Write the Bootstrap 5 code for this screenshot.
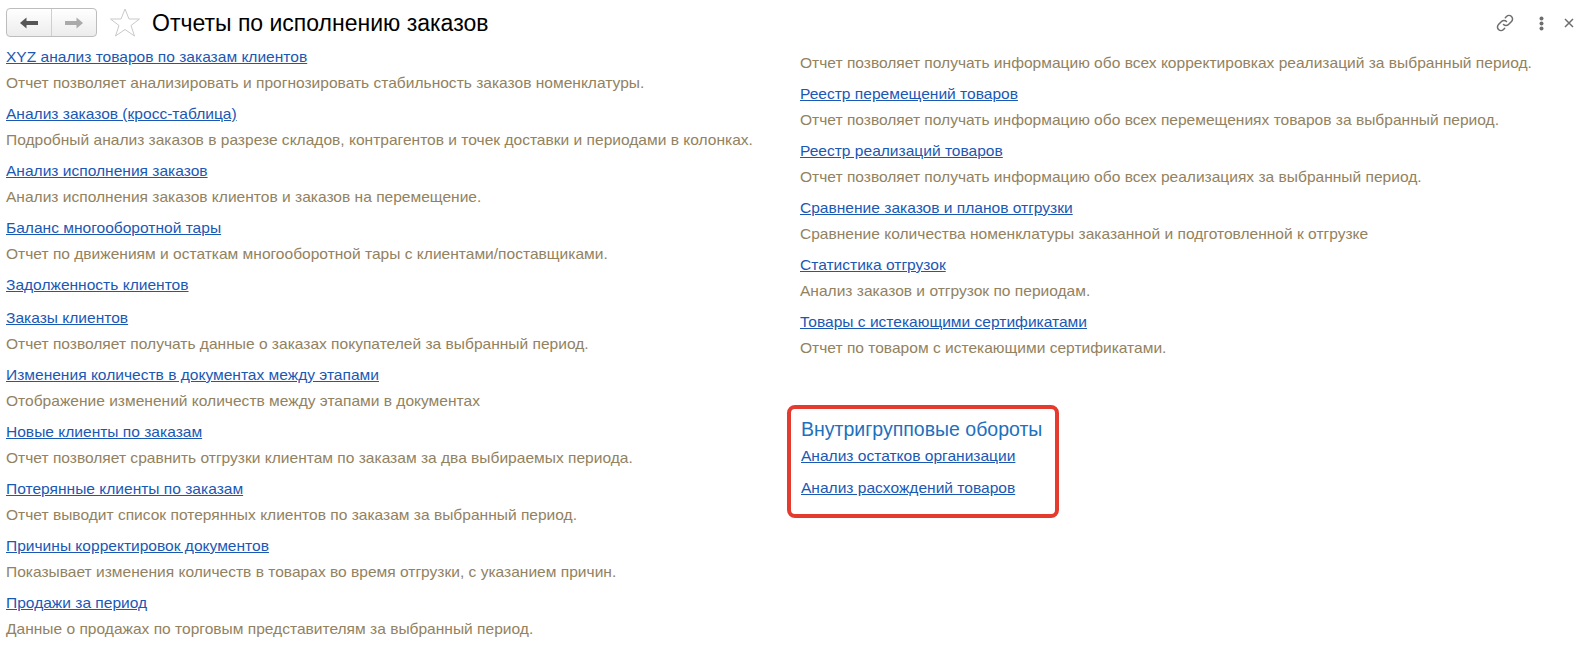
<!DOCTYPE html>
<html lang="ru"><head><meta charset="utf-8"><title>Отчеты</title>
<link rel="stylesheet" href="https://cdn.jsdelivr.net/npm/bootstrap@5.3.0/dist/css/bootstrap.min.css">
<style>
html,body{height:650px;overflow:hidden;background:#fff}
body{font-family:"Liberation Sans",Arial,sans-serif;font-size:15.55px;line-height:17px}
.topbar{height:46px;padding:8px 17px 0 6px}
.navbtns{width:91px;height:29px;border:1px solid #bdbdbd;border-radius:4px;background:linear-gradient(#fff,#ececec)}
.navbtns>div{flex:1;height:100%}
.navbtns>div+div{border-left:1px solid #cfcfcf}
.ttl{font-size:23px;line-height:30px;color:#000;margin-left:12px}
.star{margin-left:13px}
.tools{height:30px}
.gap-a{margin-left:24px}
.gap-b{margin-left:20px}
.cols{display:flex}
.colleft{width:794px;padding-left:6px}
.colright{flex:1;padding-left:6px}
.rep{height:57px;padding-top:2px}
.rep.solo{height:33px}
.rep a,.grp a{color:#1a58b4;display:block;width:max-content;text-decoration:underline}
.rep p{margin:9px 0 0;color:#928260}
.desc0{margin:8px 0 0;color:#928260;height:29px}
.redbox{width:272px;height:113px;margin:37px 0 0 -13px;border:4px solid #e53a2e;border-radius:8px;padding:9px 0 0 10px}
.grp h6{font-size:19.5px;line-height:22px;font-weight:400;color:#2170bd;margin:0 0 7px}
.grp a{margin-bottom:15px}
</style></head><body>
<div class="topbar d-flex align-items-start">
 <div class="navbtns d-flex">
  <div class="d-flex align-items-center justify-content-center"><svg width="18" height="12" viewBox="0 0 18 12"><path d="M0 6 6.500 .5V4H18V8H6.500V11.500Z" fill="#555"/></svg></div>
  <div class="d-flex align-items-center justify-content-center"><svg width="18" height="12" viewBox="0 0 18 12"><path d="M18 6 11.500 .5V4H0V8H11.500V11.500Z" fill="#aaa"/></svg></div>
 </div>
 <svg class="star" width="30" height="29" viewBox="0 0 30 29"><path d="M15 1 19 11H29.500L21 17.500 24.500 28 15 21.500 5.500 28 9 17.500 .5 11H11Z" fill="#fff" stroke="#c9c9c9"/></svg>
 <div class="ttl">Отчеты по исполнению заказов</div>
 <div class="tools ms-auto d-flex align-items-center">
  <svg width="20" height="20" viewBox="0 0 20 20" fill="none" stroke="#6e6e6e" stroke-width="1.500" stroke-linecap="round"><path d="M8.500 11.500a3.500 3.500 0 0 0 5 0l3-3a3.500 3.500 0 0 0-5-5l-1.200 1.200"/><path d="M11.500 8.500a3.500 3.500 0 0 0-5 0l-3 3a3.500 3.500 0 0 0 5 5l1.200-1.200"/></svg>
  <svg class="gap-a" width="5" height="15" viewBox="0 0 5 15" fill="#6e6e6e"><circle cx="2.500" cy="2.500" r="2"/><circle cx="2.500" cy="7.500" r="2"/><circle cx="2.500" cy="12.500" r="2"/></svg>
  <svg class="gap-b" width="10" height="10" viewBox="0 0 10 10" stroke="#6e6e6e" stroke-width="1.500"><path d="M1 1 9 9M9 1 1 9"/></svg>
 </div>
</div>
<div class="cols">
 <div class="colleft">
  <div class="rep"><a href="#">XYZ анализ товаров по заказам клиентов</a><p>Отчет позволяет анализировать и прогнозировать стабильность заказов номенклатуры.</p></div>
  <div class="rep"><a href="#">Анализ заказов (кросс-таблица)</a><p>Подробный анализ заказов в разрезе складов, контрагентов и точек доставки и периодами в колонках.</p></div>
  <div class="rep"><a href="#">Анализ исполнения заказов</a><p>Анализ исполнения заказов клиентов и заказов на перемещение.</p></div>
  <div class="rep"><a href="#">Баланс многооборотной тары</a><p>Отчет по движениям и остаткам многооборотной тары с клиентами/поставщиками.</p></div>
  <div class="rep solo"><a href="#">Задолженность клиентов</a></div>
  <div class="rep"><a href="#">Заказы клиентов</a><p>Отчет позволяет получать данные о заказах покупателей за выбранный период.</p></div>
  <div class="rep"><a href="#">Изменения количеств в документах между этапами</a><p>Отображение изменений количеств между этапами в документах</p></div>
  <div class="rep"><a href="#">Новые клиенты по заказам</a><p>Отчет позволяет сравнить отгрузки клиентам по заказам за два выбираемых периода.</p></div>
  <div class="rep"><a href="#">Потерянные клиенты по заказам</a><p>Отчет выводит список потерянных клиентов по заказам за выбранный период.</p></div>
  <div class="rep"><a href="#">Причины корректировок документов</a><p>Показывает изменения количеств в товарах во время отгрузки, с указанием причин.</p></div>
  <div class="rep"><a href="#">Продажи за период</a><p>Данные о продажах по торговым представителям за выбранный период.</p></div>
 </div>
 <div class="colright">
  <p class="desc0">Отчет позволяет получать информацию обо всех корректировках реализаций за выбранный период.</p>
  <div class="rep"><a href="#">Реестр перемещений товаров</a><p>Отчет позволяет получать информацию обо всех перемещениях товаров за выбранный период.</p></div>
  <div class="rep"><a href="#">Реестр реализаций товаров</a><p>Отчет позволяет получать информацию обо всех реализациях за выбранный период.</p></div>
  <div class="rep"><a href="#">Сравнение заказов и планов отгрузки</a><p>Сравнение количества номенклатуры заказанной и подготовленной к отгрузке</p></div>
  <div class="rep"><a href="#">Статистика отгрузок</a><p>Анализ заказов и отгрузок по периодам.</p></div>
  <div class="rep"><a href="#">Товары с истекающими сертификатами</a><p>Отчет по товаром с истекающими сертификатами.</p></div>
  <div class="redbox grp"><h6>Внутригрупповые обороты</h6><a href="#">Анализ остатков организации</a><a href="#">Анализ расхождений товаров</a></div>
 </div>
</div>
</body></html>
